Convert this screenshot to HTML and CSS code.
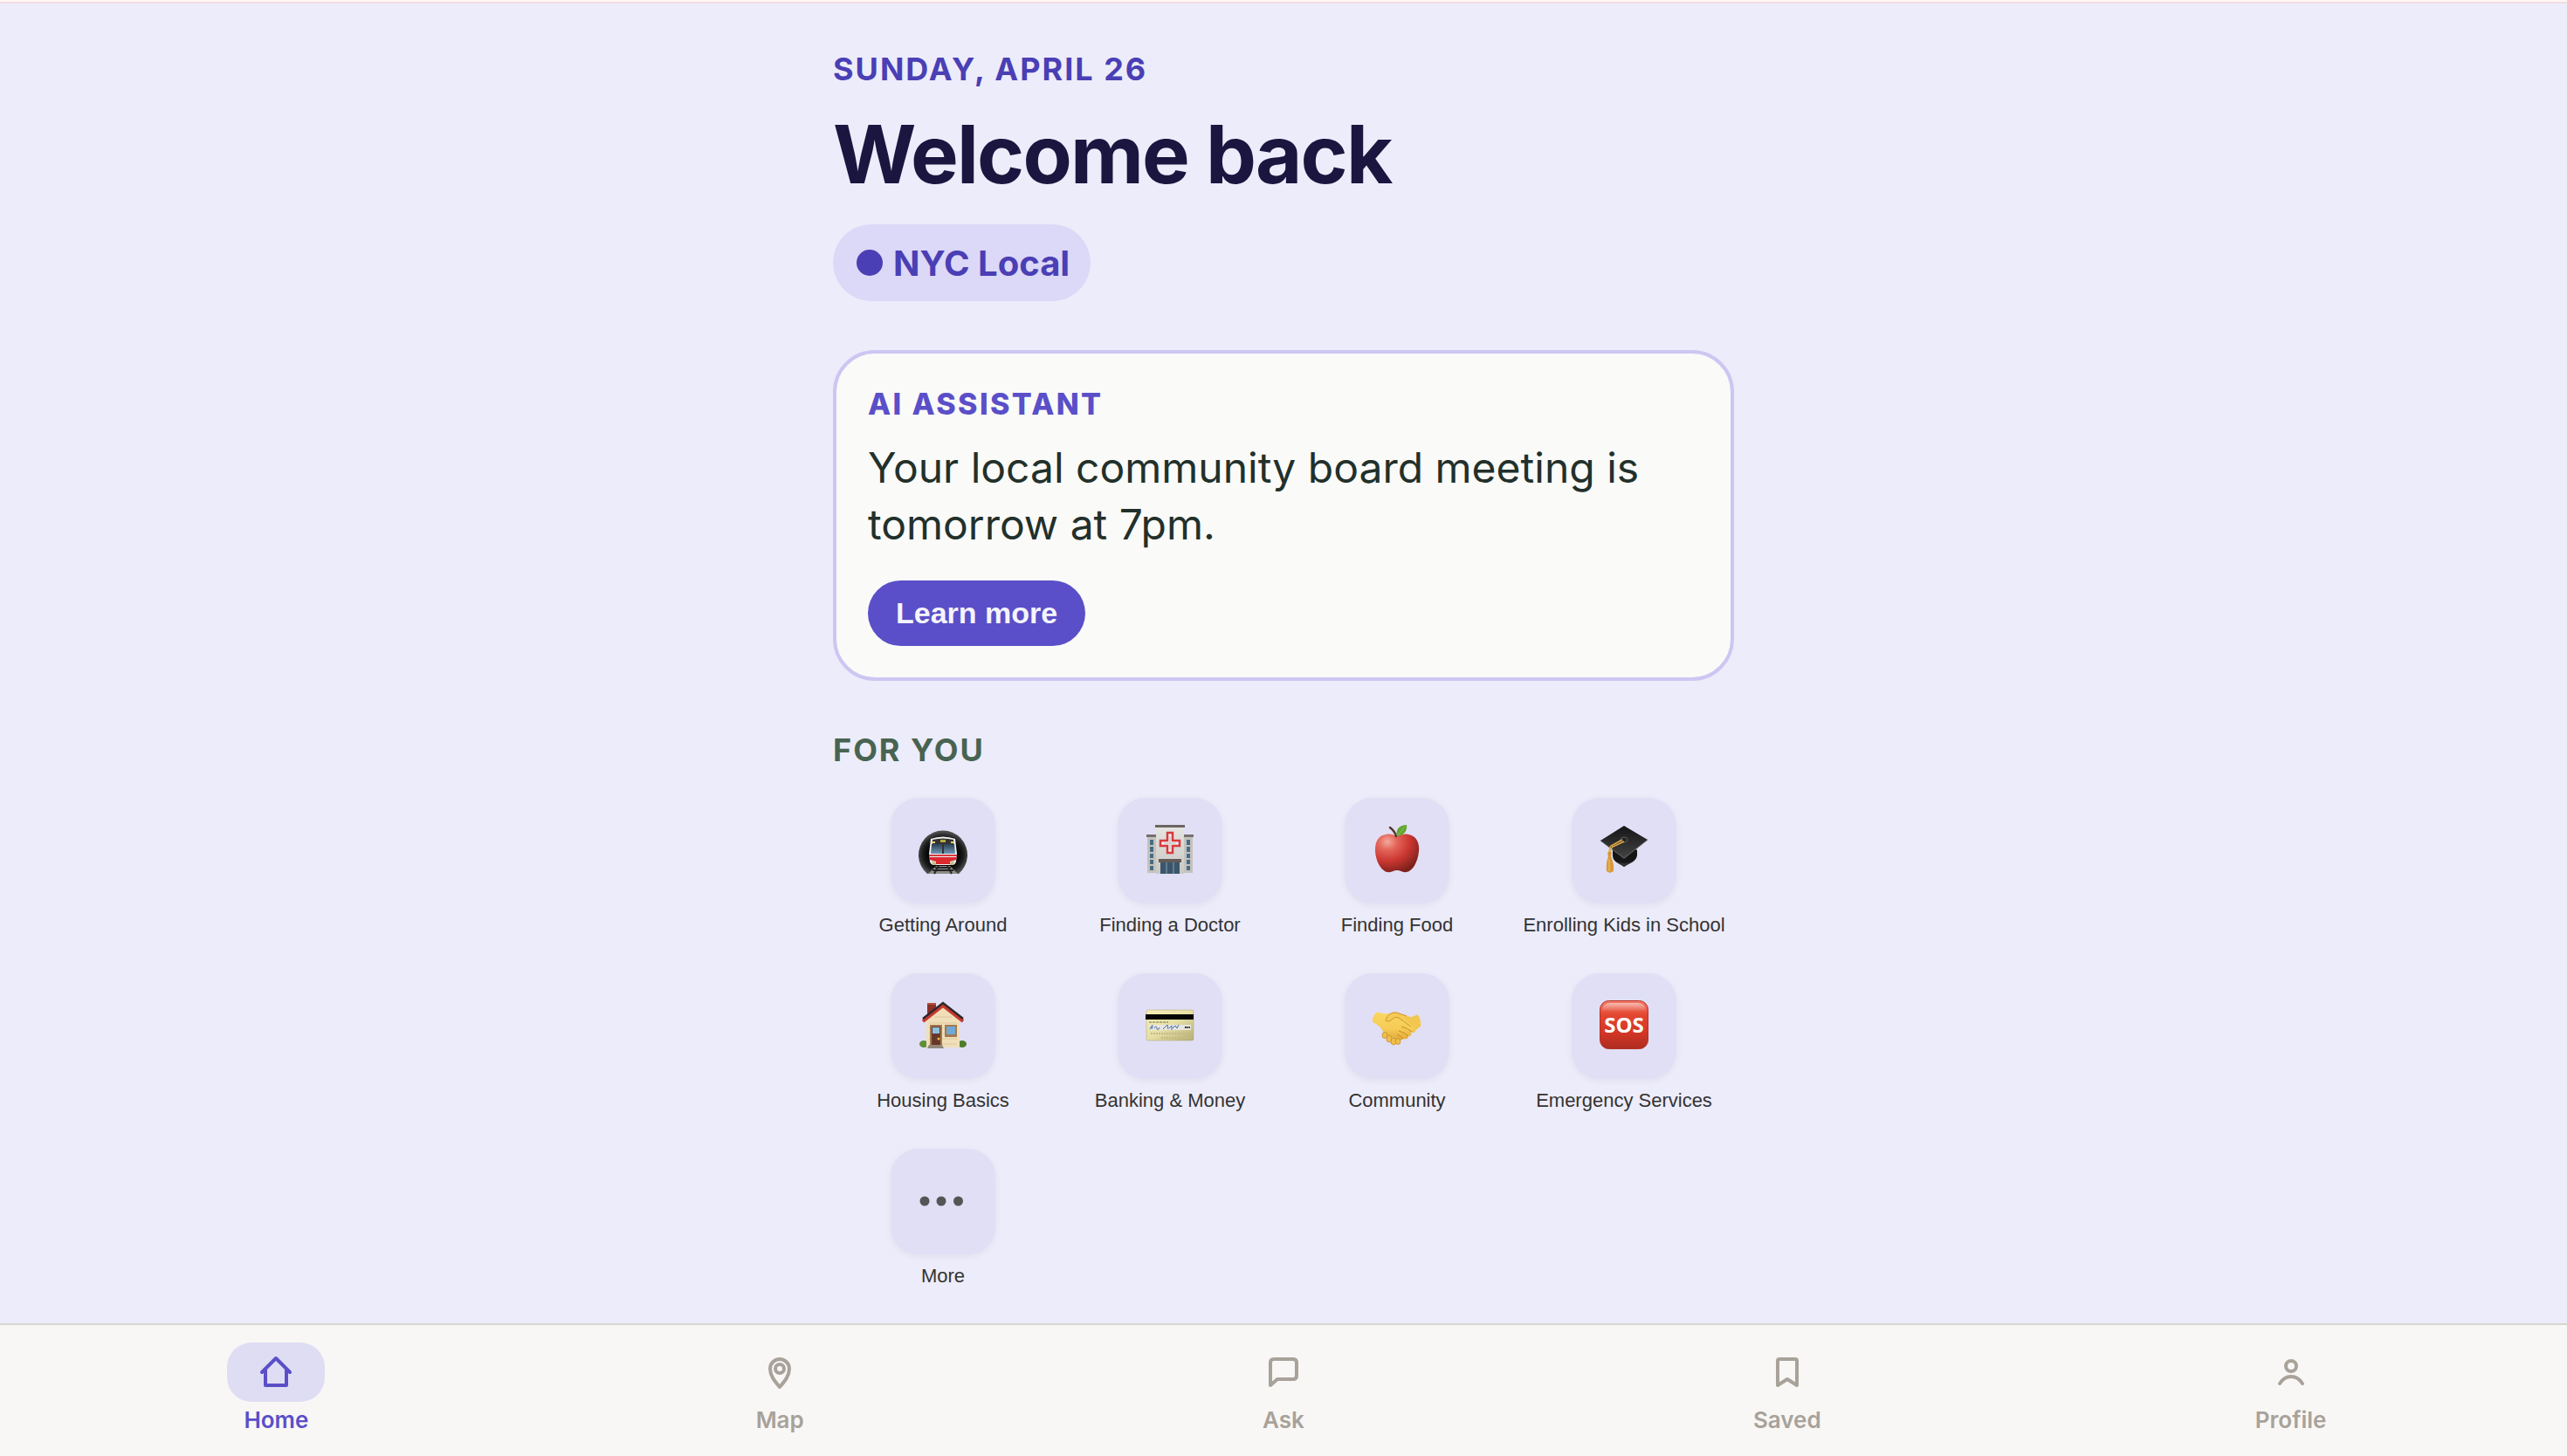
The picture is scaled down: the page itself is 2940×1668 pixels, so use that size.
FILE: index.html
```html
<!DOCTYPE html>
<html lang="en">
<head>
<meta charset="utf-8">
<meta name="viewport" content="width=device-width, initial-scale=1">
<title>Home</title>
<link rel="stylesheet" href="styles.css">
</head>
<body>
<div class="top-strip"></div>
<main class="page">
  <header class="intro">
    <p class="date">Sunday, April 26</p>
    <h1 class="title">Welcome back</h1>
    <span class="badge"><span class="badge-dot"></span>NYC Local</span>
  </header>

  <section class="assistant">
    <h2 class="assistant-title">AI Assistant</h2>
    <p class="assistant-text">Your local community board meeting is tomorrow at 7pm.</p>
    <button class="learn" type="button">Learn more</button>
  </section>

  <section class="topics">
    <h2 class="topics-title">For you</h2>
    <div class="grid">
      <a class="topic" href="#getting-around">
        <span class="tile"><svg class="emoji" viewBox="0 0 60 60">
          <defs>
            <radialGradient id="tunnel" cx=".5" cy=".55" r=".52"><stop offset=".55" stop-color="#000"/><stop offset=".8" stop-color="#1c1c1c"/><stop offset="1" stop-color="#4c4c4c"/></radialGradient>
            <linearGradient id="glass" x1="0" y1="0" x2="0" y2="1"><stop offset="0" stop-color="#2c4154"/><stop offset="1" stop-color="#6e97b5"/></linearGradient>
          </defs>
          <path d="M12 57A28 28 0 1 1 48 57Z" fill="url(#tunnel)"/>
          <path d="M22 48 13 57H47L38 48Z" fill="#8d8d8b"/>
          <path d="M21 50H39M18 53H42M25 48 20 57M35 48 40 57" stroke="#262626" stroke-width="2"/>
          <path d="M16 17Q30 12 44 17L46 34 45 43Q44 47 40 47H20Q16 47 15 43L14 34Z" fill="#f1f1f1"/>
          <path d="M18 18Q30 15 42 18L43 34H17Z" fill="#323236"/>
          <path d="M17 23H29V34H16ZM31 23H43L44 34H31Z" fill="url(#glass)"/>
          <path d="M27 18H33V21H27Z" fill="#b8a93a"/>
          <path d="M18 21H21M39 21H42" stroke="#ffd558" stroke-width="2"/>
          <path d="M14 35H46V37H14Z" fill="#d53a3e"/>
          <path d="M14 38H46L45 41 38 43H22L15 41Z" fill="#da292f"/>
          <path d="M17 42 22 44V47H18ZM43 42 38 44V47H42Z" fill="#c3bd89"/>
          <path d="M22 43H38V46H22Z" fill="#da292f"/>
        </svg></span>
        <span class="topic-label">Getting Around</span>
      </a>
      <a class="topic" href="#doctor">
        <span class="tile"><svg class="emoji" viewBox="0 0 60 60">
          <defs><linearGradient id="wall" x1="0" x2="0" y1="0" y2="1"><stop offset="0" stop-color="#e5e4e1"/><stop offset="1" stop-color="#c9c8c4"/></linearGradient></defs>
          <path d="M4 14H15V56H4ZM45 14H56V56H45Z" fill="#c4c2bc"/>
          <path d="M3 12H15V15H3ZM45 12H57V15H45Z" fill="#76716e"/>
          <path d="M14 3H46V57H14Z" fill="#d6d5d1"/>
          <path d="M14 3H46V57H14Z" fill="url(#wall)"/>
          <path d="M13 1H47V4H13Z" fill="#6b6562"/>
          <path d="M7 18H11V24H7ZM7 26H11V32H7ZM7 34H11V39H7ZM7 41H11V46H7ZM7 48H11V53H7ZM49 18H53V24H49ZM49 26H53V32H49ZM49 34H53V39H49ZM49 41H53V46H49ZM49 48H53V53H49Z" fill="#456d85"/>
          <path d="M27 10H33V19H41V25H33V33H27V25H19V19H27Z" fill="#eee" stroke="#d83a3d" stroke-width="2.5"/>
          <path d="M30 14V29M23 22H37" stroke="#c9b9b7" stroke-width="1"/>
          <path d="M17 40H43V44H17Z" fill="#625b58"/>
          <path d="M19 44H41V57H19Z" fill="#3b566a"/>
          <path d="M26 44V57M34 44V57" stroke="#86a5b7" stroke-width="1"/>
        </svg></span>
        <span class="topic-label">Finding a Doctor</span>
      </a>
      <a class="topic" href="#food">
        <span class="tile"><svg class="emoji" viewBox="0 0 60 60">
          <defs><radialGradient id="apple" cx=".28" cy=".2" r=".85"><stop offset="0" stop-color="#f3aa9d"/><stop offset=".25" stop-color="#e4665b"/><stop offset=".6" stop-color="#cb3731"/><stop offset="1" stop-color="#7d201b"/></radialGradient></defs>
          <path d="M30 14C34 12 39 11 43 12 52 13 56 22 55 31 54 43 48 54 41 55 36 56 34 53 30 53 26 53 24 56 19 55 12 54 5 42 5 29 5 20 9 13 17 12 22 11 26 12 30 14Z" fill="url(#apple)"/>
          <path d="M29 14C28 10 26 7 22 4" fill="none" stroke="#59352b" stroke-width="2.5" stroke-linecap="round"/>
          <path d="M30 14C28 6 33 1 41 1 42 8 38 13 30 14Z" fill="#63a52e"/>
          <path d="M31 13 39 3" stroke="#91c64d" stroke-width="1"/>
        </svg></span>
        <span class="topic-label">Finding Food</span>
      </a>
      <a class="topic" href="#school">
        <span class="tile"><svg class="emoji" viewBox="0 0 60 60">
          <defs><linearGradient id="board" x1="0" x2="0" y1="0" y2="1"><stop offset="0" stop-color="#151515"/><stop offset="1" stop-color="#444"/></linearGradient></defs>
          <path d="M17 28 30 20 45 30V36C44 43 36 45 30 49 24 45 17 43 17 36Z" fill="#161616"/>
          <path d="M20 42Q30 48 41 42L30 49Z" fill="#333"/>
          <path d="M30 2 57 18 30 40 3 19Z" fill="url(#board)"/>
          <path d="M3 19 30 39 57 18" fill="none" stroke="#626262" stroke-width="1"/>
          <ellipse cx="30" cy="18" rx="4" ry="3" fill="#242424" stroke="#5b5b5b" stroke-width="1"/>
          <path d="M28 18 15 25Q13 27 13 34M30 20 17 26Q15 28 14 34" fill="none" stroke="#e8ae45" stroke-width="1.5"/>
          <path d="M11 33Q14 30 16 33L15 37H12Z" fill="#d59739"/>
          <path d="M12 37H15Q19 46 18 54L14 56 10 54Q9 45 12 37Z" fill="#d9993b"/>
          <path d="M13 40V54" stroke="#f1c361" stroke-width="1"/>
        </svg></span>
        <span class="topic-label">Enrolling Kids in School</span>
      </a>
      <a class="topic" href="#housing">
        <span class="tile"><svg class="emoji" viewBox="0 0 60 60">
          <ellipse cx="8" cy="51" rx="5" ry="4" fill="#5f8f37"/><ellipse cx="52" cy="51" rx="5" ry="4" fill="#4e7d2c"/>
          <path d="M12 4H22V20H12Z" fill="#8d3029"/><path d="M12 4H22V6H12Z" fill="#b44e3e"/>
          <path d="M11 23 30 9 49 23V55H11Z" fill="#f1dfb9"/>
          <path d="M14 27H46M14 33H46M14 39H46M14 45H46M14 51H46M20 20H40" stroke="#dfc99e" stroke-width="1"/>
          <path d="M7 25 30 7 53 25" fill="none" stroke="#c8392f" stroke-width="4"/>
          <path d="M7 22 30 4 53 22" fill="none" stroke="#2d282a" stroke-width="2.5"/>
          <path d="M15 29H29V53H15Z" fill="#a27a52"/><path d="M17 31H27V53H17Z" fill="#67382a"/><path d="M18 32H26V39H18Z" fill="#8dc0df"/><circle cx="25" cy="45" r="1.5" fill="#f0bb44"/>
          <path d="M32 29H46V43H32Z" fill="#a27a52"/><path d="M34 31H44V40H34Z" fill="#71a9d4"/>
          <path d="M14 52H29L31 56H12Z" fill="#91877b"/>
        </svg></span>
        <span class="topic-label">Housing Basics</span>
      </a>
      <a class="topic" href="#banking">
        <span class="tile"><svg class="emoji" viewBox="0 0 60 60">
          <defs><linearGradient id="card" x1="0" x2="1" y1="0" y2="1"><stop offset="0" stop-color="#f5f0b5"/><stop offset=".5" stop-color="#e6dfa5"/><stop offset="1" stop-color="#b7ad73"/></linearGradient></defs>
          <rect x="3" y="12" width="54" height="35" rx="2" fill="url(#card)" stroke="#aca46e" stroke-width=".5"/>
          <path d="M2 17H57V23H2Z" fill="#050505"/>
          <path d="M6 29H54V35H6Z" fill="#e6e6df"/>
          <path d="M6 26H28" stroke="#777150" stroke-width="1" stroke-dasharray="3 1"/>
          <path d="M7 34Q12 25 9 34M12 33Q14 29 15 33T18 32M22 34 27 29 28 34M29 33 32 30V35M33 33 36 30 38 33 40 29" fill="none" stroke="#4b6cab" stroke-width="1"/>
          <path d="M47 32H53" stroke="#333" stroke-width="2" stroke-dasharray="2 .5"/>
          <path d="M8 39H54M20 44H54" stroke="#c2ba88" stroke-width="2" stroke-dasharray="2 1"/>
        </svg></span>
        <span class="topic-label">Banking &amp; Money</span>
      </a>
      <a class="topic" href="#community">
        <span class="tile"><svg class="emoji" viewBox="0 0 60 60">
          <defs><linearGradient id="skin" x1="0" x2="0" y1="0" y2="1"><stop offset="0" stop-color="#fad763"/><stop offset=".6" stop-color="#f5cb55"/><stop offset="1" stop-color="#e0a836"/></linearGradient></defs>
          <path d="M53 17Q58 22 57 31L50 36 40 37 24 25 20 18Q26 12 34 16L45 20Q50 20 53 17Z" fill="#f3c74f"/>
          <path d="M8 14Q12 17 20 16L28 17 43 26Q51 32 51 37 49 39 46 37 48 42 43 42 43 46 38 45 33 48 30 46L15 39Q12 30 2 26 1 18 8 14Z" fill="url(#skin)"/>
          <g fill="#efc049" stroke="#c28424" stroke-width=".7"><ellipse cx="16" cy="41" rx="3" ry="3.5"/><ellipse cx="21" cy="45" rx="3" ry="4"/><ellipse cx="26" cy="48" rx="3" ry="4"/><ellipse cx="31" cy="48" rx="3" ry="3.5"/></g>
          <path d="M17 24Q20 14 29 15L38 18 42 26 32 21Q28 19 25 22 21 27 17 24Z" fill="#f5cb55"/>
          <path d="M17 24Q20 14 29 15L41 19M17 24Q21 27 25 22 28 19 32 21L46 31" fill="none" stroke="#cf9530" stroke-width="1"/>
          <path d="M35 31Q42 33 47 37M32 36Q39 38 43 42M30 40Q35 42 37 45" fill="none" stroke="#c68a25" stroke-width="1"/>
        </svg></span>
        <span class="topic-label">Community</span>
      </a>
      <a class="topic" href="#emergency">
        <span class="tile"><svg class="emoji" viewBox="0 0 60 60">
          <defs><linearGradient id="sos" x1="0" x2="0" y1="0" y2="1"><stop offset="0" stop-color="#f37c69"/><stop offset=".3" stop-color="#e34630"/><stop offset=".65" stop-color="#d53725"/><stop offset="1" stop-color="#ad2c20"/></linearGradient><linearGradient id="shine" x1="0" x2="0" y1="0" y2="1"><stop offset="0" stop-color="#fff" stop-opacity=".5"/><stop offset="1" stop-color="#fff" stop-opacity="0"/></linearGradient></defs>
          <rect x="2.5" y="1.5" width="55" height="55" rx="10" fill="url(#sos)" stroke="#b53325"/>
          <path d="M5 14Q5 4 14 4H46Q55 4 55 14Z" fill="url(#shine)"/>
          <text class="sos-text" x="30" y="38" text-anchor="middle">SOS</text>
        </svg></span>
        <span class="topic-label">Emergency Services</span>
      </a>
      <a class="topic" href="#more">
        <span class="tile"><svg class="emoji" viewBox="0 0 60 60"><g fill="#555"><circle cx="9" cy="30" r="5.5"/><circle cx="28" cy="30" r="5.5"/><circle cx="47.5" cy="30" r="5.5"/></g></svg></span>
        <span class="topic-label">More</span>
      </a>
    </div>
  </section>
</main>

<nav class="tabs">
  <a class="tab tab-active" href="#home"><span class="tab-icon"><svg viewBox="0 0 44 44"><path d="M6 22 22 6 38 22M10 19V37H34V19"/></svg></span>Home</a>
  <a class="tab" href="#map"><span class="tab-icon"><svg viewBox="0 0 44 44"><path d="M22 39C16 32 11 26 11 18A11 11 0 0 1 33 18C33 26 28 32 22 39Z"/><circle cx="22" cy="18" r="5"/></svg></span>Map</a>
  <a class="tab" href="#ask"><span class="tab-icon"><svg viewBox="0 0 44 44"><path d="M7 37V11Q7 7 11 7H33Q37 7 37 11V26Q37 30 33 30H15Z"/></svg></span>Ask</a>
  <a class="tab" href="#saved"><span class="tab-icon"><svg viewBox="0 0 44 44"><path d="M11 37V9Q11 7 13 7H31Q33 7 33 9V37L22 30Z"/></svg></span>Saved</a>
  <a class="tab" href="#profile"><span class="tab-icon"><svg viewBox="0 0 44 44"><circle cx="22" cy="15" r="6"/><path d="M9 35Q14 27 22 27T35 35"/></svg></span>Profile</a>
</nav>
</body>
</html>
```
FILE: styles.css
```css
* {
  box-sizing: border-box;
}

body {
  margin: 0;
  min-height: 100vh;
  display: flex;
  flex-direction: column;
  background: #edecfa;
  font-family: Inter, "Liberation Sans", sans-serif;
}

h1,
h2,
p {
  margin: 0;
}

a {
  color: inherit;
  text-decoration: none;
}

.top-strip {
  height: 4px;
  background: #fdf6f3;
  border-bottom: 2px solid #f2dde2;
}

.page {
  flex: 1;
  width: 100%;
  max-width: 1120px;
  margin: 0 auto;
  padding: 53px 44px 32px;
}

.intro {
  display: flex;
  flex-direction: column;
  align-items: flex-start;
}

.date {
  color: #4a3fb5;
  font-size: 36px;
  font-weight: 700;
  line-height: 44px;
  letter-spacing: 2px;
  text-transform: uppercase;
}

.title {
  margin-top: 20px;
  color: #1a1640;
  font-size: 92px;
  font-weight: 700;
  line-height: 112px;
  letter-spacing: -0.02em;
}

.badge {
  display: flex;
  align-items: center;
  gap: 12px;
  height: 88px;
  margin-top: 24px;
  padding: 0 24px 0 27px;
  border-radius: 44px;
  background: #dcd8f7;
  color: #4a3fb5;
  font-size: 40px;
  font-weight: 700;
}

.badge-dot {
  width: 30px;
  height: 30px;
  border-radius: 50%;
  background: #4a3fb5;
}

.assistant {
  margin-top: 56px;
  padding: 36px;
  border: 4px solid #cdc6f2;
  border-radius: 48px;
  background: #fafaf8;
}

.assistant-title {
  color: #5a4fc8;
  font-size: 34px;
  font-weight: 800;
  line-height: 44px;
  letter-spacing: 0.07em;
  text-transform: uppercase;
}

.assistant-text {
  margin-top: 18px;
  color: #22302b;
  font-size: 48px;
  font-weight: 400;
  line-height: 65px;
}

.learn {
  display: block;
  height: 75px;
  margin-top: 32px;
  padding: 0 32px;
  border: 0;
  border-radius: 38px;
  background: #5a4fc8;
  color: #f5f4fc;
  font-family: "Liberation Sans", Arial, sans-serif;
  font-size: 34px;
  font-weight: 700;
}

.topics {
  margin-top: 57px;
}

.topics-title {
  color: #486351;
  font-size: 36px;
  font-weight: 700;
  line-height: 44px;
  letter-spacing: 2px;
  text-transform: uppercase;
}

.grid {
  display: grid;
  grid-template-columns: repeat(4, 1fr);
  gap: 41px 8px;
  margin-top: 33px;
}

.topic {
  display: flex;
  flex-direction: column;
  align-items: center;
  gap: 11px;
}

.tile {
  display: grid;
  place-items: center;
  width: 120px;
  height: 121px;
  padding-bottom: 2px;
  border-radius: 32px;
  background: #e1dff5;
  box-shadow: 0 2px 8px rgba(0, 0, 0, 0.06);
}

.emoji {
  width: 60px;
  height: 60px;
}

.sos-text {
  fill: #fff;
  font-family: "Open Sans", sans-serif;
  font-size: 24px;
  font-weight: 700;
}

.topic-label {
  color: #333;
  font-family: "Liberation Sans", Arial, sans-serif;
  font-size: 22px;
  line-height: 28px;
  white-space: nowrap;
}

.tabs {
  display: grid;
  grid-template-columns: repeat(5, 1fr);
  padding: 20px 28px 24px;
  border-top: 2px solid #d8d6ce;
  background: #f8f7f5;
}

.tab {
  display: flex;
  flex-direction: column;
  align-items: center;
  gap: 4px;
  color: #a8a29a;
  font-size: 26px;
  font-weight: 600;
  line-height: 34px;
}

.tab-icon {
  display: grid;
  place-items: center;
  width: 112px;
  height: 68px;
  border-radius: 28px;
}

.tab-icon svg {
  width: 44px;
  height: 44px;
  fill: none;
  stroke: currentColor;
  stroke-width: 4;
  stroke-linecap: round;
  stroke-linejoin: round;
}

.tab-active {
  color: #5a4fc8;
}

.tab-active .tab-icon {
  background: #dfddf3;
}
```
